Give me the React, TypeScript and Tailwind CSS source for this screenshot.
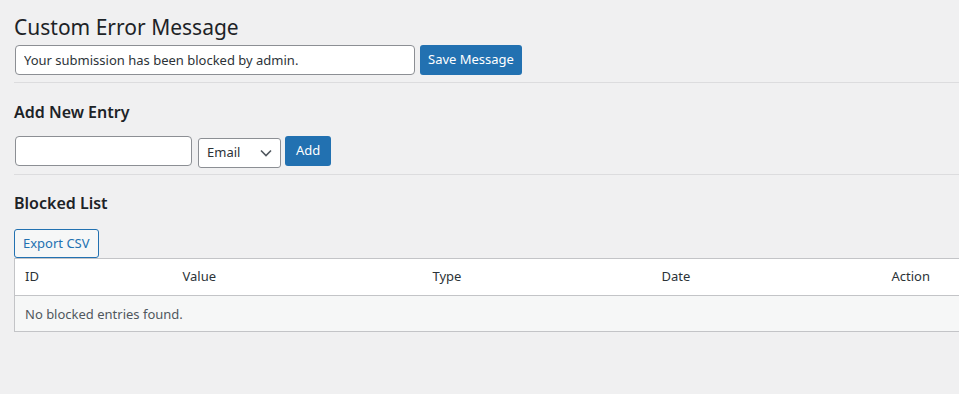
export default function App() {
  return (
    <div className="min-h-[394px] w-full overflow-hidden bg-[#f0f0f1] pl-[14px] text-[13px] text-[#3c434a] [font-family:'Noto_Sans',sans-serif]">
      {/* Custom message */}
      <h1 className="pt-[12px] text-[21px] leading-[30px] font-normal text-[#1d2327]">Custom Error Message</h1>
      <div className="mt-[3px] flex items-start">
        <input
          type="text"
          defaultValue="Your submission has been blocked by admin."
          className="ml-px h-[30px] w-[400px] rounded-[4px] border border-[#8c8f94] bg-white px-[8px] text-[13px] text-[#2c3338] outline-none"
        />
        <button className="ml-[5px] h-[30px] rounded-[3px] bg-[#2271b1] px-[8px] text-[13px] text-white">Save Message</button>
      </div>
      <hr className="mt-[7px] w-[960px] border-t border-[#dcdcde]" />

      {/* Add new entry */}
      <h2 className="pt-[17px] text-[16px] leading-[24px] font-semibold text-[#1d2327]">Add New Entry</h2>
      <div className="mt-[12px] flex items-start">
        <input type="text" className="ml-px h-[30px] w-[177px] rounded-[4px] border border-[#8c8f94] bg-white px-[8px] outline-none" />
        <div className="relative ml-[6px] mt-[2px] flex h-[30px] w-[83px] items-center rounded-[3px] border border-[#8c8f94] bg-white pl-[8px] text-[13px] text-[#2c3338]">
          Email
          <svg className="absolute right-[8px] top-[10px]" width="12" height="8" viewBox="0 0 12 8" fill="none">
            <path d="M1 1.5 L6 6.5 L11 1.5" stroke="#50575e" strokeWidth="1.6" />
          </svg>
        </div>
        <button className="ml-[4px] h-[30px] rounded-[3px] bg-[#2271b1] px-[11px] text-[13px] text-white">Add</button>
      </div>
      <hr className="mt-[6px] w-[960px] border-t border-[#dcdcde]" />

      {/* Blocked list */}
      <h2 className="pt-[16px] text-[16px] leading-[24px] font-semibold text-[#1d2327]">Blocked List</h2>
      <button className="mt-[14px] h-[29px] rounded-[3px] border border-[#2271b1] bg-[#f6f7f7] px-[8px] text-[13px] text-[#2271b1]">Export CSV</button>
      <table className="w-[1115px] table-fixed border-collapse border border-[#c3c4c7] text-left">
        <thead>
          <tr className="h-[37px] border-b border-[#c3c4c7] bg-white text-[13px] text-[#2c3338]">
            <th className="w-[158px] px-[10px] font-normal">ID</th>
            <th className="w-[250px] px-[10px] font-normal">Value</th>
            <th className="w-[229px] px-[10px] font-normal">Type</th>
            <th className="w-[230px] px-[10px] font-normal">Date</th>
            <th className="px-[10px] font-normal">Action</th>
          </tr>
        </thead>
        <tbody>
          <tr className="h-[36px] bg-[#f6f7f7]">
            <td colSpan={5} className="px-[10px] pt-[2px] text-[13px] text-[#50575e]">No blocked entries found.</td>
          </tr>
        </tbody>
      </table>
    </div>
  );
}
